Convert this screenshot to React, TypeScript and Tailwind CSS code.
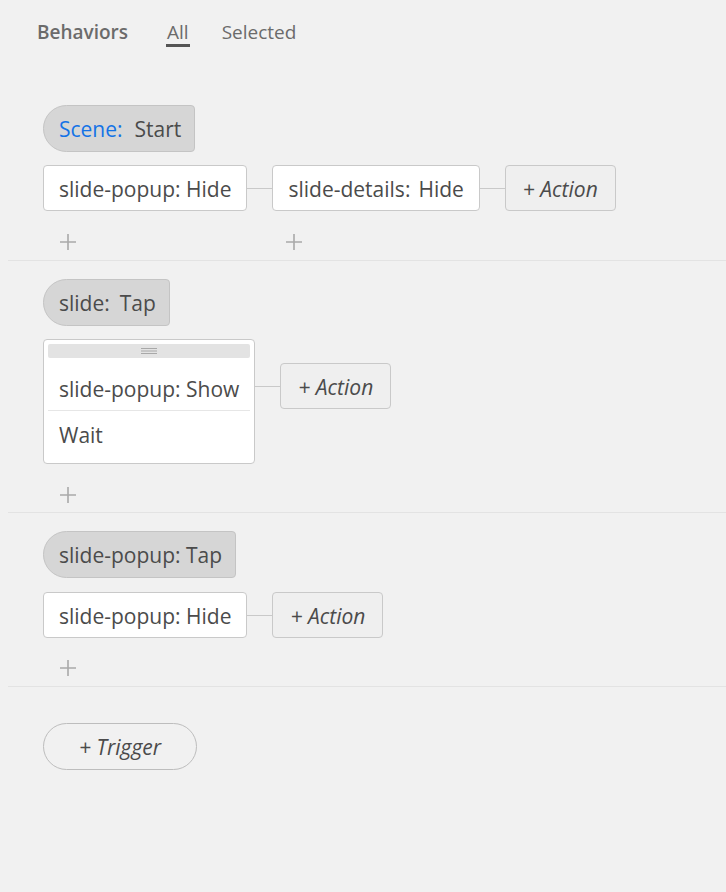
import { FC, ReactNode } from "react";

const Plus: FC = () => (
  <svg width="18" height="18" viewBox="0 0 18 18" className="block">
    <path d="M9 1v16M1 9h16" stroke="#a9a9a9" strokeWidth="1.6" fill="none" />
  </svg>
);

const Connector: FC = () => <div className="h-px w-[25px] bg-[#c9c9c9]" />;

const TriggerPill: FC<{ children: ReactNode }> = ({ children }) => (
  <div className="flex h-[47px] items-center self-start rounded-l-[24px] rounded-r-[4px] border border-[#c4c4c4] bg-[#d6d6d6] pl-[15px] pr-[13px] pt-[3px] text-[21px] text-[#4b4b4b]">
    {children}
  </div>
);

const ActionBox: FC<{ children: ReactNode }> = ({ children }) => (
  <div className="flex h-[46px] items-center rounded-[4px] border border-[#c9c9c9] bg-white px-[15px] pt-[3px] text-[21px] text-[#4b4b4b]">
    {children}
  </div>
);

const AddAction: FC = () => (
  <div className="flex h-[46px] items-center rounded-[4px] border border-[#c9c9c9] bg-[#efefef] px-[17px] pt-[3px] text-[21px] italic text-[#4b4b4b]">
    + Action
  </div>
);

const App: FC = () => {
  return (
    <div
      className="min-h-[892px] w-[726px] bg-[#f1f1f1] text-[#4b4b4b]"
      style={{ fontFamily: '"Open Sans", "Noto Sans", sans-serif' }}
    >
      {/* header tabs */}
      <div className="flex h-[86px] items-start pl-[37px] pt-[20px] text-[19px] leading-[24px]">
        <span className="font-semibold text-[#6b6b6b]">Behaviors</span>
        <span className="ml-[38px] border-b-[3px] border-[#555] px-[1px] text-[#6b6b6b]">All</span>
        <span className="ml-[32px] text-[#6b6b6b]">Selected</span>
      </div>

      {/* Scene: Start */}
      <div className="flex flex-col pl-[43px] pt-[19px]">
        <TriggerPill>
          <span className="text-[#1473e6]">Scene:</span>
          <span className="ml-[12px]">Start</span>
        </TriggerPill>
        <div className="mt-[13px] flex items-center">
          <ActionBox>slide-popup: Hide</ActionBox>
          <Connector />
          <ActionBox>
            slide-details:<span className="ml-[8px]">Hide</span>
          </ActionBox>
          <Connector />
          <AddAction />
        </div>
        <div className="mt-[22px] mb-[9px] flex">
          <div className="ml-[16px]">
            <Plus />
          </div>
          <div className="ml-[208px]">
            <Plus />
          </div>
        </div>
      </div>
      <div className="ml-[8px] h-px bg-[#e3e3e3]" />

      {/* slide: Tap */}
      <div className="flex flex-col pl-[43px] pt-[18px]">
        <TriggerPill>
          slide:<span className="ml-[10px]">Tap</span>
        </TriggerPill>
        <div className="mt-[13px] flex items-start">
          <div className="rounded-[4px] border border-[#c9c9c9] bg-white p-[4px]">
            <div className="flex h-[14px] items-center justify-center rounded-[2px] bg-[#e3e3e3]">
              <svg width="16" height="6" viewBox="0 0 16 6">
                <path d="M0 0.5h16M0 3h16M0 5.5h16" stroke="#a8a8a8" strokeWidth="1" />
              </svg>
            </div>
            <div className="mt-[9px] flex h-[44px] items-center border-b border-[#e6e6e6] px-[11px] pt-[3px] text-[21px]">
              slide-popup: Show
            </div>
            <div className="flex h-[48px] items-center px-[11px] pt-[1px] text-[21px]">Wait</div>
          </div>
          <div className="mt-[47px] flex items-center">
            <Connector />
          </div>
          <div className="mt-[24px]">
            <AddAction />
          </div>
        </div>
        <div className="mt-[22px] mb-[8px] ml-[16px]">
          <Plus />
        </div>
      </div>
      <div className="ml-[8px] h-px bg-[#e3e3e3]" />

      {/* slide-popup: Tap */}
      <div className="flex flex-col pl-[43px] pt-[18px]">
        <TriggerPill>slide-popup: Tap</TriggerPill>
        <div className="mt-[14px] flex items-center">
          <ActionBox>slide-popup: Hide</ActionBox>
          <Connector />
          <AddAction />
        </div>
        <div className="mt-[21px] mb-[9px] ml-[16px]">
          <Plus />
        </div>
      </div>
      <div className="ml-[8px] h-px bg-[#e3e3e3]" />

      <div className="pl-[43px] pt-[36px]">
        <div className="flex h-[47px] w-[154px] items-center justify-center rounded-full border border-[#bdbdbd] pt-[3px] text-[21px] italic">
          + Trigger
        </div>
      </div>
    </div>
  );
};

export default App;
